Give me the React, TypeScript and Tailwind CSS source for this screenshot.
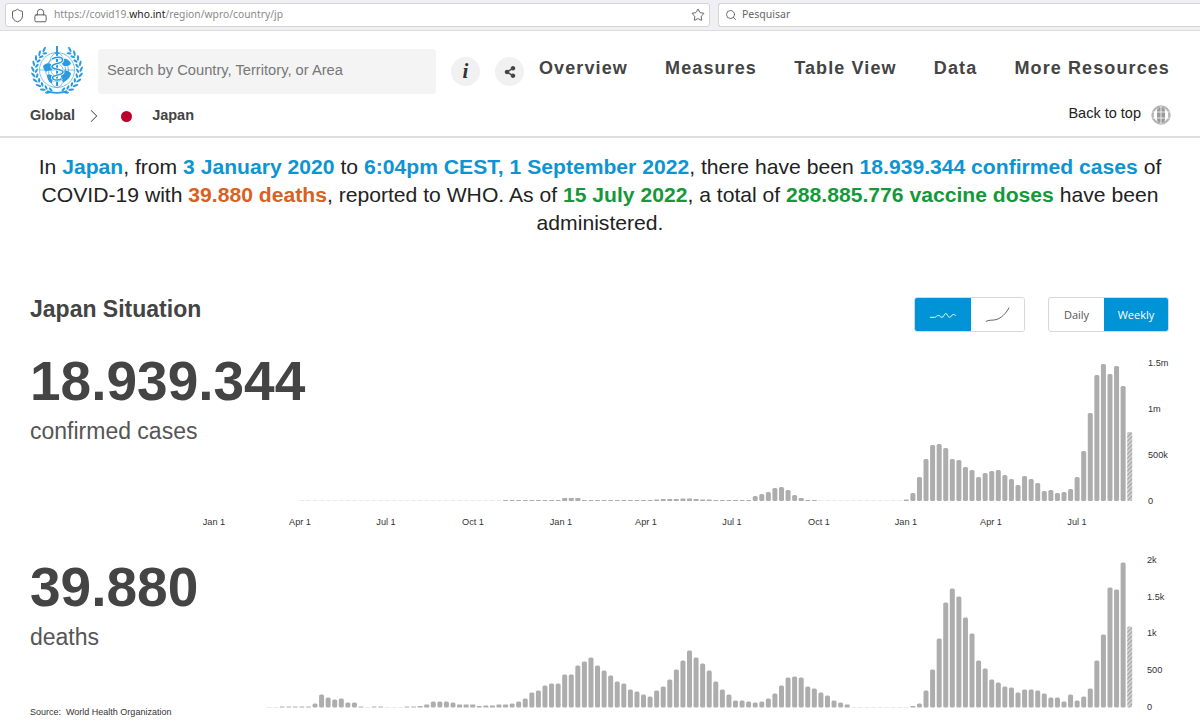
import React from "react";
import { Shield, Lock, Star, Search, ChevronRight } from "lucide-react";
import { FaShareAlt } from "react-icons/fa";

const rep = (n: number, v: number) => Array.from({ length: n }, () => v);

const confirmed = [
  69, 115, 135, 127, 137, 126, 88, 50, 24, 12, 9, 8, 11, 10, 18, 22, 25, 16, 22, 26, 31, 30, 28, 24, 31, 34, 41, 42, 53, 57, 56, 42, 24, 8, 1.5,
  ...rep(13, 0.5), 1, 1, 3, 6, 11, 14, 13, 9, 7, 5,
  1, 1, 1, 1, 1, 1, 1.5, 1.5, 2, 2.5, 2.5, 2, 2, 2, 1.5,
  ...rep(11, 1), 3, 3, 3, ...rep(9, 1), ...rep(31, 0.5),
];

const deaths = [
  81, 145, 118, 120, 73, 47, 19, 11, 7, 13, 6, 10, 10, 14, 17, 18, 18, 15, 20, 21, 25, 28, 39, 47, 74, 90, 111, 119, 105, 69, 38, 17, 4, 1.5,
  ...rep(9, 0.5), 3, 5, 7, 12, 15, 19, 21, 30, 31, 30, 22, 14, 9, 6, 5, 6, 7, 7, 13, 18, 26, 37, 44, 50, 57, 47, 38, 28, 21, 17, 11, 13, 16, 18, 24, 26, 32, 37, 42, 50, 46, 42, 33, 33,
  24, 24, 22, 17, 15, 9, 6, 4, 3, 3, 2, 2, 1.5, 3, 3, 3, 5, 6, 6, 6, 3, 1.5, 1, 1, 0.5, 0.5, 0.5, 1, 1, 0.5, 1, 5, 5, 9, 8, 10, 13, 4, 1, 1, 1, 1, 1, 0.5, 0.5,
];

type Tick = [string, number];

function Chart({ id, data, height, base, yTicks, xLabels, yLabelX }: { id: string; data: number[]; height: number; base: number; yTicks: Tick[]; xLabels?: Tick[]; yLabelX: number }) {
  return (
    <svg viewBox={`0 0 1200 ${height}`} width={1200} height={height} className="block [grid-area:1/1]">
      <defs>
        <pattern id={id} width="3" height="3" patternUnits="userSpaceOnUse" patternTransform="rotate(45)">
          <rect width="3" height="3" fill="#d8d8d8" />
          <rect width="1.4" height="3" fill="#a4a4a4" />
        </pattern>
      </defs>
      {data.map((h, k) => {
        const x = 1129.7 - 6.57 * k;
        return (
          <rect
            key={k}
            x={x - 2.5}
            y={base - h}
            width={5}
            height={h}
            rx={h > 3 ? 1.6 : 0.4}
            fill={k === 0 ? `url(#${id})` : h < 1 ? "#d6d6d6" : "#adadad"}
          />
        );
      })}
      {yTicks.map(([t, y]) => (
        <text key={t} x={yLabelX} y={y + 3} fontSize="9.2" fill="#333" fontFamily="Liberation Sans, Arial, sans-serif">{t}</text>
      ))}
      {xLabels?.map(([t, x], i) => (
        <text key={i} x={x} y={base + 24} fontSize="9.2" textAnchor="middle" fill="#333" fontFamily="Liberation Sans, Arial, sans-serif">{t}</text>
      ))}
    </svg>
  );
}

function WhoLogo() {
  const c = "#2a9bdc";
  const phis = [58, 44, 30, 16, 2, -12, -26, -40, -54, -68];
  const leaf = (R: number, phi: number, tilt: number, ry: number, key: string) => {
    const a = (phi * Math.PI) / 180;
    const x = 27 - R * Math.cos(a);
    const y = 24 - R * Math.sin(a);
    const r = phi + tilt;
    return (
      <g key={key}>
        <ellipse cx={x} cy={y} rx="1.1" ry={ry} fill={c} transform={`rotate(${r} ${x} ${y})`} />
        <ellipse cx={54 - x} cy={y} rx="1.1" ry={ry} fill={c} transform={`rotate(${-r} ${54 - x} ${y})`} />
      </g>
    );
  };
  return (
    <svg viewBox="0 0 54 48" width="54" height="48" className="shrink-0">
      {phis.map((p) => leaf(24.2, p, -30, 3, `o${p}`))}
      {phis.map((p) => leaf(20.6, p - 4, 30, 2.4, `i${p}`))}
      <g fill="none" stroke={c} strokeWidth="0.6">
        <circle cx="27" cy="24" r="17.500" />
        <circle cx="27" cy="24" r="11.500" />
        <circle cx="27" cy="24" r="6" />
        <ellipse cx="27" cy="24" rx="8.500" ry="17.500" />
        <path d="M9.500 24h35" />
        <path d="M17 45c5 2.500 15 2.500 20 0" strokeWidth="1.6" />
      </g>
      <path d="M13 20c4-4 8-3 9 0 1.500 4-1 5-4 4.500-1.500 2-4 1-5-4.500zM17 29c3-1 6 0 6 2.500l-1 6c-3-1-5-5-5-8.500zM32 13c4-1 8 1 9 5-3 2.500-6 2.500-8 1.500-1-2-2-4-1-6.500zM31 25c4-1 9 0 10 2.500-1 5-5 7.500-8 9-1-4-3.500-8-2-11.500z" fill={c} />
      <path d="M27 0v40" stroke={c} strokeWidth="2" />
      <path d="M27 3l-2 5h4z" fill={c} />
      <path d="M22 13c5-3 11-2 10.500 1.500S22.500 17 22 20.500s11 2 11 5.500-10 2.500-10.500 5.500 7.500 3.500 9 1" fill="none" stroke="#fff" strokeWidth="3" />
      <path d="M22 13c5-3 11-2 10.500 1.500S22.500 17 22 20.500s11 2 11 5.500-10 2.500-10.500 5.500 7.500 3.500 9 1" fill="none" stroke={c} strokeWidth="1.500" />
    </svg>
  );
}

function GlobeIcon() {
  return (
    <svg viewBox="0 0 20 20" width="20" height="20" className="shrink-0">
      <circle cx="10" cy="10" r="8.500" fill="none" stroke="#b5b5b5" strokeWidth="2.400" />
      <rect x="6" y="2.500" width="8" height="15" rx="3.500" fill="#9a9a9a" />
      <path d="M1.500 7h17M1.500 13h17M10 1v18" stroke="#fff" strokeWidth="0.8" />
    </svg>
  );
}

function NavItem({ children }: { children: React.ReactNode }) {
  return <span className="text-[18px] leading-6 font-bold tracking-[1.1px] text-[#444] whitespace-nowrap">{children}</span>;
}

export default function App() {
  const blue = "text-[#0f94d2] font-bold";
  const green = "text-[#14993a] font-bold";
  return (
    <div className="w-[1200px] h-[721px] overflow-hidden bg-white font-['Liberation_Sans',Arial,sans-serif]">
      {/* browser toolbar */}
      <div className="h-[31px] bg-[#f0f0f4] border-b border-[#dcdcdc] flex items-start gap-[8px] pl-[5px] pt-[3px] font-['Noto_Sans',sans-serif]">
        <div className="w-[705px] h-[24px] bg-white border border-[#d4d4d4] rounded-[3px] flex items-center pl-[4px] pr-[4px] shrink-0">
          <Shield size={15} strokeWidth={1.5} className="text-[#555]" />
          <Lock size={15} strokeWidth={1.5} className="text-[#555] ml-[8px]" />
          <span className="ml-[6px] text-[10.3px] text-[#8a8a8a] whitespace-nowrap">
            https://covid19.<span className="text-[#222]">who.int</span>/region/wpro/country/jp
          </span>
          <Star size={14} strokeWidth={1.4} className="text-[#444] ml-auto" />
        </div>
        <div className="flex-1 h-[24px] bg-white border border-[#d4d4d4] border-r-0 rounded-l-[3px] flex items-center pl-[6px]">
          <Search size={12} strokeWidth={1.7} className="text-[#555]" />
          <span className="ml-[5px] text-[10.5px] text-[#666]">Pesquisar</span>
        </div>
      </div>

      {/* site header */}
      <div className="h-[107px] border-b-2 border-[#dedede] pl-[30px] pr-[30px] pt-[15px]">
        <div className="flex items-start h-[50px]">
          <WhoLogo />
          <div className="ml-[14px] w-[338px] h-[45px] mt-[3px] bg-[#f4f4f4] rounded-[3px] flex items-center pl-[9px] pb-[2px] text-[14.7px] text-[#777]">
            Search by Country, Territory, or Area
          </div>
          <div className="ml-[15px] mt-[11px] w-[29px] h-[29px] rounded-full bg-[#f1f1f1] flex items-center justify-center font-['Liberation_Serif',serif] italic font-bold text-[21px] text-[#333]">i</div>
          <div className="ml-[15px] mt-[11px] w-[29px] h-[29px] rounded-full bg-[#f1f1f1] flex items-center justify-center text-[#444]">
            <FaShareAlt size={12} />
          </div>
          <div className="ml-[15px] mt-[10px] flex-1 flex justify-between">
            <NavItem>Overview</NavItem>
            <NavItem>Measures</NavItem>
            <NavItem>Table View</NavItem>
            <NavItem>Data</NavItem>
            <NavItem>More Resources</NavItem>
          </div>
        </div>
        <div className="flex items-center h-[20px] mt-[10px]">
          <span className="text-[14.5px] font-bold text-[#444]">Global</span>
          <ChevronRight size={22} strokeWidth={1.1} className="text-[#555] ml-[8px]" />
          <span className="ml-[16px] w-[11px] h-[11px] rounded-full bg-[#bc002d]" />
          <span className="ml-[20px] text-[14.5px] font-bold text-[#444]">Japan</span>
          <span className="ml-auto text-[14.5px] text-[#222] -mt-[4px]">Back to top</span>
          <span className="ml-[10px] mr-[-1px] -mt-[2px]"><GlobeIcon /></span>
        </div>
      </div>

      {/* summary */}
      <p className="mt-[15px] px-[30px] text-center text-[21.13px] leading-[28px] text-[#222]">
        In <span className={blue}>Japan</span>, from <span className={blue}>3 January 2020</span> to <span className={blue}>6:04pm CEST, 1 September 2022</span>, there have been <span className={blue}>18.939.344 confirmed cases</span> of COVID-19 with <span className="text-[#d9611f] font-bold">39.880 deaths</span>, reported to WHO. As of <span className={green}>15 July 2022</span>, a total of <span className={green}>288.885.776 vaccine doses</span> have been administered.
      </p>

      {/* situation header */}
      <div className="mt-[58px] h-[55px] flex items-start pl-[30px] pr-[31px]">
        <h2 className="text-[23px] leading-7 font-bold text-[#444]">Japan Situation</h2>
        <div className="ml-auto mt-[2px] flex w-[111px] h-[35px] border border-[#d8d8d8] rounded-[3px] overflow-hidden">
          <div className="w-[56px] bg-[#0093d5] flex items-center justify-center">
            <svg viewBox="0 0 30 10" width="28" height="10"><path d="M1 7.500h5c2 0 2-2 4-2s2 2 4 2 2-4 4-4 2 4 4 4 2-3 4-3 2 1 3 1" fill="none" stroke="#fff" strokeWidth="1" /></svg>
          </div>
          <div className="flex-1 bg-white flex items-center justify-center">
            <svg viewBox="0 0 28 18" width="26" height="18"><path d="M1 16c3-2 7-1 11-2 6-2 10-6 14-13" fill="none" stroke="#444" strokeWidth="0.9" /></svg>
          </div>
        </div>
        <div className="ml-[23px] mt-[2px] flex w-[121px] h-[35px] border border-[#d8d8d8] rounded-[3px] overflow-hidden font-['Open_Sans',sans-serif] text-[11px] pt-[1px] bg-white">
          <div className="w-[55px] text-[#555] flex items-center justify-center">Daily</div>
          <div className="flex-1 bg-[#0093d5] text-white flex items-center justify-center -mt-[1px] pt-[1px]">Weekly</div>
        </div>
      </div>

      {/* confirmed */}
      <div className="grid h-[191px]">
        <Chart
          id="hatchA"
          data={confirmed}
          height={191}
          base={151}
          yLabelX={1148}
          yTicks={[["1.5m", 13], ["1m", 59], ["500k", 105], ["0", 151]]}
          xLabels={[["Jan 1", 214], ["Apr 1", 300], ["Jul 1", 386], ["Oct 1", 473], ["Jan 1", 561], ["Apr 1", 646], ["Jul 1", 732], ["Oct 1", 819], ["Jan 1", 906], ["Apr 1", 991], ["Jul 1", 1077]]}
        />
        <div className="[grid-area:1/1] pl-[30px] pt-[1px]">
          <div className="text-[55px] leading-[60px] font-bold text-[#444]">18.939.344</div>
          <div className="mt-[6px] text-[23px] leading-7 text-[#555]">confirmed cases</div>
        </div>
      </div>

      {/* deaths */}
      <div className="grid h-[181px]">
        <Chart
          id="hatchB"
          data={deaths}
          height={181}
          base={166.5}
          yLabelX={1147}
          yTicks={[["2k", 19], ["1.5k", 56], ["1k", 92], ["500", 129], ["0", 166]]}
        />
        <div className="[grid-area:1/1] pl-[30px] pt-[16px] flex flex-col">
          <div className="text-[55px] leading-[60px] font-bold text-[#444]">39.880</div>
          <div className="mt-[6px] text-[23px] leading-7 text-[#555]">deaths</div>
          <div className="mt-[55px] text-[9px] leading-3 text-[#333]">Source:&nbsp; World Health Organization</div>
        </div>
      </div>
    </div>
  );
}
